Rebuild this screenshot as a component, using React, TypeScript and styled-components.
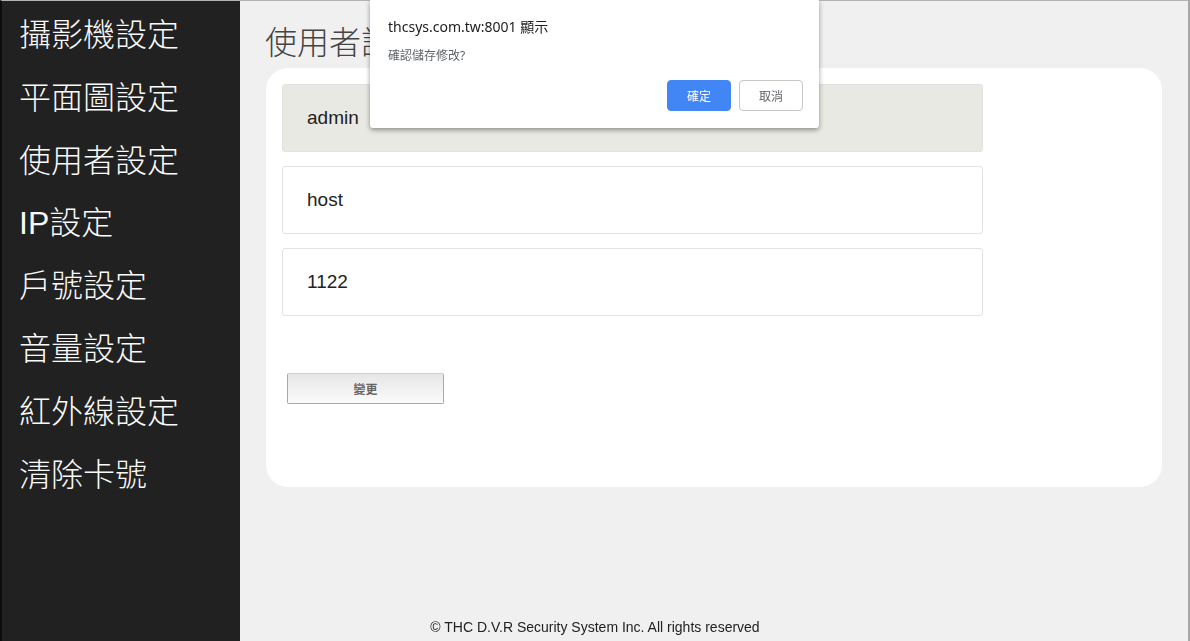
import React from 'react';
import styled, { createGlobalStyle } from 'styled-components';

const GlobalStyle = createGlobalStyle`
  html, body {
    margin: 0;
    padding: 0;
    height: 100%;
    overflow: hidden;
    background: #f0f0f0;
  }
  body {
    font-family: 'Liberation Sans', Arial, 'Noto Sans CJK TC', sans-serif;
  }
`;

const menuItems = ['攝影機設定', '平面圖設定', '使用者設定', 'IP設定', '戶號設定', '音量設定', '紅外線設定', '清除卡號'];
const users = [
  { name: 'admin', disabled: true },
  { name: 'host', disabled: false },
  { name: '1122', disabled: false },
];

const App = () => {
  return (
    <>
      <GlobalStyle />
      <Page>
        <Sidebar>
          {menuItems.map(item => (
            <MenuItem key={item}>{item}</MenuItem>
          ))}
        </Sidebar>
        <Main>
          <Title>使用者設定</Title>
          <Card>
            <FieldList>
              {users.map(u => (
                <UserField key={u.name} disabled={u.disabled} defaultValue={u.name} readOnly />
              ))}
            </FieldList>
            <ChangeButton>變更</ChangeButton>
          </Card>
        </Main>
        <Footer>© THC D.V.R Security System Inc. All rights reserved</Footer>
      </Page>

      {/* browser confirm() popup */}
      <Dialog>
        <DialogTitle>thcsys.com.tw:8001 顯示</DialogTitle>
        <DialogMessage>確認儲存修改?</DialogMessage>
        <DialogActions>
          <DialogButton primary>確定</DialogButton>
          <DialogButton>取消</DialogButton>
        </DialogActions>
      </Dialog>
    </>
  );
};

export default App;

const Page = styled.div`
  display: flex;
  height: 100vh;
  box-sizing: border-box;
  border-top: 1px solid #b2b2b2;
  border-left: 2px solid #0c0c0c;
  border-right: 2px solid #a8a8a8;
`;

const Sidebar = styled.nav`
  position: relative;
  z-index: 2;
  width: 238px;
  flex-shrink: 0;
  background: #212121;
  padding-top: 3px;
  box-sizing: border-box;
`;

const MenuItem = styled.div`
  height: 62.8px;
  line-height: 62.8px;
  padding-left: 17px;
  color: #fafafa;
  font-size: 32px;
  font-family: 'Liberation Sans', Arial, 'Noto Sans CJK TC', sans-serif;
  font-weight: 300;
  white-space: nowrap;
`;

const Main = styled.main`
  flex: 1;
  padding: 22px 0 0 25px;
  box-sizing: border-box;
`;

const Title = styled.h2`
  margin: 0 0 5px;
  height: 40px;
  line-height: 40px;
  font-size: 32px;
  font-weight: 300;
  color: #444;
  font-family: 'Liberation Sans', Arial, 'Noto Sans CJK TC', sans-serif;
`;

const Card = styled.section`
  margin-left: 1px;
  width: 896px;
  height: 419px;
  box-sizing: border-box;
  background: #fff;
  border-radius: 22px;
  padding: 16px 16px;
`;

const FieldList = styled.div`
  display: flex;
  flex-direction: column;
  gap: 14px;
  width: 701px;
`;

const UserField = styled.input`
  height: 68px;
  box-sizing: border-box;
  border: 1px solid #e2e2e2;
  border-radius: 3px;
  padding: 0 24px;
  font-size: 19px;
  font-family: 'Liberation Sans', Arial, sans-serif;
  color: #222;
  background: ${props => (props.disabled ? '#e9e9e3' : '#fff')};
  outline: none;
`;

const ChangeButton = styled.button`
  display: block;
  margin: 57px 0 0 5px;
  width: 157px;
  height: 31px;
  border: 1px solid #a9a9a9;
  border-top-color: #d0d0d0;
  border-radius: 2px;
  background: linear-gradient(#e6e6e6, #fbfbfb);
  font-size: 12px;
  font-weight: bold;
  color: #666;
  font-family: 'Noto Sans CJK TC', sans-serif;
`;

const Footer = styled.footer`
  position: fixed;
  left: 0;
  right: 0;
  bottom: 6px;
  text-align: center;
  font-size: 14px;
  color: #222;
  font-family: 'Liberation Sans', Arial, sans-serif;
  z-index: 1;
`;

const Dialog = styled.div`
  position: fixed;
  top: 0;
  left: 370px;
  width: 449px;
  height: 128px;
  box-sizing: border-box;
  background: #fff;
  border-radius: 0 0 3px 3px;
  box-shadow: 0 2px 5px rgba(0, 0, 0, 0.4);
  padding: 17px 16px 0 18px;
  font-family: 'Noto Sans', 'Noto Sans CJK TC', sans-serif;
  z-index: 10;
`;

const DialogTitle = styled.div`
  font-size: 14px;
  line-height: 20px;
  color: #202124;
`;

const DialogMessage = styled.div`
  margin-top: 11px;
  font-size: 12px;
  line-height: 16px;
  color: #5f6368;
`;

const DialogActions = styled.div`
  display: flex;
  justify-content: flex-end;
  gap: 8px;
  margin-top: 16px;
`;

const DialogButton = styled.button<{ primary?: boolean }>`
  width: 64px;
  height: 31px;
  border-radius: 4px;
  font-size: 12px;
  font-family: 'Noto Sans CJK TC', sans-serif;
  border: 1px solid ${props => (props.primary ? '#4285f4' : '#c6c6c6')};
  background: ${props => (props.primary ? '#4285f4' : '#fff')};
  color: ${props => (props.primary ? '#fff' : '#5f6368')};
`;
